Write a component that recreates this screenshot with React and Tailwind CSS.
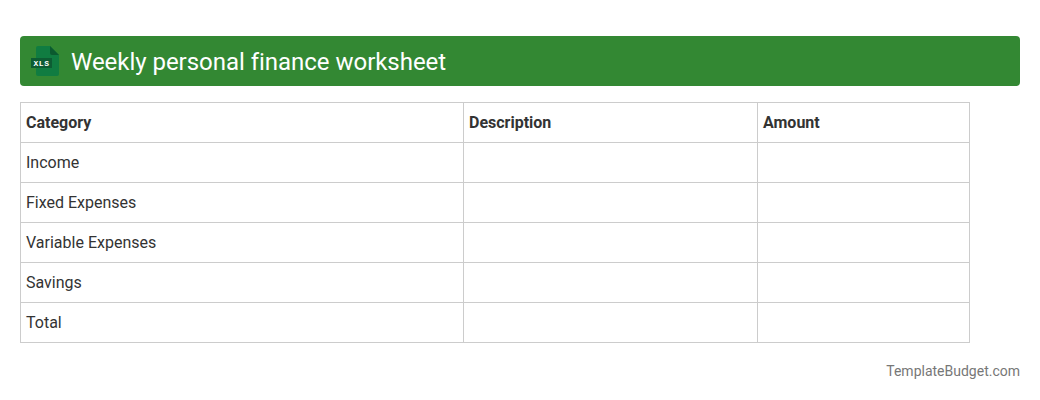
import React from 'react';

const rows = ['Income', 'Fixed Expenses', 'Variable Expenses', 'Savings', 'Total'];

const XlsIcon = () => (
  <svg width="32" height="32" viewBox="0 0 32 32" className="shrink-0">
    <path d="M10 1h12l9 9v19a2 2 0 0 1-2 2H10a2 2 0 0 1-2-2V3a2 2 0 0 1 2-2z" fill="#107c41" />
    <path d="M22 1l9 9h-7a2 2 0 0 1-2-2z" fill="#0b5a2f" />
    <rect x="3" y="13" width="21" height="10" fill="#0d5c33" />
    <text x="13.5" y="21" textAnchor="middle" fontSize="8" fontWeight="700" letterSpacing="0.5" fill="#ffffff" fontFamily="'Liberation Mono', monospace">XLS</text>
  </svg>
);

export default function App() {
  return (
    <div className="w-[1040px] h-[400px] bg-white px-5 pt-9 font-['Roboto',sans-serif] text-[#333333]">
      <div className="h-[50px] bg-[#338833] rounded flex items-center pl-[8px] gap-[11px]">
        <XlsIcon />
        <h1 className="text-2xl text-white font-normal pt-[2px] tracking-[-0.03px]">Weekly personal finance worksheet</h1>
      </div>

      <table className="mt-4 w-[949px] border-collapse table-fixed text-base">
        <colgroup>
          <col className="w-[443px]" />
          <col className="w-[294px]" />
          <col className="w-[212px]" />
        </colgroup>
        <thead>
          <tr className="h-10">
            <th className="border border-[#cccccc] px-[5px] text-left font-bold">Category</th>
            <th className="border border-[#cccccc] px-[5px] text-left font-bold">Description</th>
            <th className="border border-[#cccccc] px-[5px] text-left font-bold">Amount</th>
          </tr>
        </thead>
        <tbody>
          {rows.map((row) => (
            <tr key={row} className="h-10">
              <td className="border border-[#cccccc] px-[5px]">{row}</td>
              <td className="border border-[#cccccc] px-[5px]"></td>
              <td className="border border-[#cccccc] px-[5px]"></td>
            </tr>
          ))}
        </tbody>
      </table>

      <div className="mt-[18px] text-right text-sm text-[#777777]">TemplateBudget.com</div>
    </div>
  );
}
